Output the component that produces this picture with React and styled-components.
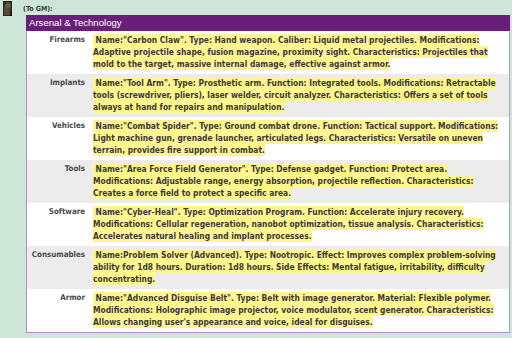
import React from 'react';
import styled, { createGlobalStyle } from 'styled-components';

const Global = createGlobalStyle`
  html, body {
    margin: 0;
    padding: 0;
    background: #cde6d8;
  }
  body {
    font-family: "DejaVu Sans Condensed", "DejaVu Sans", Verdana, sans-serif;
    color: #3b3b3b;
  }
`;

const Post = styled.div`
  display: flex;
  align-items: flex-start;
  padding: 1px 2px 5px 3px;
`;

const Avatar = styled.div`
  width: 9px;
  height: 15px;
  flex: none;
  background:
    radial-gradient(circle at 55% 30%, #6b5a48 0 2px, transparent 3px),
    radial-gradient(ellipse at 40% 80%, #5a4a3a 0 2px, transparent 4px),
    linear-gradient(160deg, #2c2a22 0%, #4a4034 45%, #1e1f1a 100%);
  box-shadow: inset 0 0 0 1px rgba(0, 0, 0, 0.35);
`;

const Body = styled.div`
  margin-left: 11px;
  flex: 1;
`;

const Sender = styled.div`
  font-size: 7px;
  font-weight: bold;
  line-height: 12px;
  padding-top: 2px;
  color: #3a3a3a;
`;

const Table = styled.div`
  margin-left: 3px;
  width: 482px;
  border: 1px solid #b48dc4;
  border-right-color: #a9a9a9;
  border-top: none;
  background: #fff;
`;

const Header = styled.div`
  background: #6a1e7b;
  color: #fff;
  font-family: "Liberation Sans", Arial, sans-serif;
  font-size: 9.6px;
  line-height: 16px;
  padding: 0 3px;
  margin: 0 -1px 0 -1px;
`;

const Row = styled.div`
  display: grid;
  grid-template-columns: 65px 1fr;
  min-height: 43px;
  background: ${p => (p.$shade ? '#ececec' : '#ffffff')};
`;

const Label = styled.div`
  text-align: right;
  font-size: 7.9px;
  font-weight: bold;
  line-height: 12px;
  color: #4a4a4a;
  padding: 3px 7px 0 0;
`;

const Value = styled.div`
  font-size: 8.4px;
  font-weight: bold;
  line-height: 12px;
  padding: 3px 3px 2px 1px;
`;

const Mark = styled.span`
  background: #fff58e;
  color: #3b3b3b;
  padding: 1.2px 0;
`;

const items = [
  ['Firearms', 'Name:"Carbon Claw". Type: Hand weapon. Caliber: Liquid metal projectiles. Modifications: Adaptive projectile shape, fusion magazine, proximity sight. Characteristics: Projectiles that mold to the target, massive internal damage, effective against armor.'],
  ['Implants', 'Name:"Tool Arm". Type: Prosthetic arm. Function: Integrated tools. Modifications: Retractable tools (screwdriver, pliers), laser welder, circuit analyzer. Characteristics: Offers a set of tools always at hand for repairs and manipulation.'],
  ['Vehicles', 'Name:"Combat Spider". Type: Ground combat drone. Function: Tactical support. Modifications: Light machine gun, grenade launcher, articulated legs. Characteristics: Versatile on uneven terrain, provides fire support in combat.'],
  ['Tools', 'Name:"Area Force Field Generator". Type: Defense gadget. Function: Protect area. Modifications: Adjustable range, energy absorption, projectile reflection. Characteristics: Creates a force field to protect a specific area.'],
  ['Software', 'Name:"Cyber-Heal". Type: Optimization Program. Function: Accelerate injury recovery. Modifications: Cellular regeneration, nanobot optimization, tissue analysis. Characteristics: Accelerates natural healing and implant processes.'],
  ['Consumables', 'Name:Problem Solver (Advanced). Type: Nootropic. Effect: Improves complex problem-solving ability for 1d8 hours. Duration: 1d8 hours. Side Effects: Mental fatigue, irritability, difficulty concentrating.'],
  ['Armor', 'Name:"Advanced Disguise Belt". Type: Belt with image generator. Material: Flexible polymer. Modifications: Holographic image projector, voice modulator, scent generator. Characteristics: Allows changing user\'s appearance and voice, ideal for disguises.'],
];

export default function App() {
  return (
    <>
      <Global />
      <Post>
        <Avatar />
        <Body>
          <Sender>(To GM):</Sender>
          <Table>
            <Header>Arsenal &amp; Technology</Header>
            {items.map(([name, text], i) => (
              <Row key={name} $shade={i % 2 === 1}>
                <Label>{name}</Label>
                <Value><Mark>{'\u00a0' + text}</Mark></Value>
              </Row>
            ))}
          </Table>
        </Body>
      </Post>
    </>
  );
}
